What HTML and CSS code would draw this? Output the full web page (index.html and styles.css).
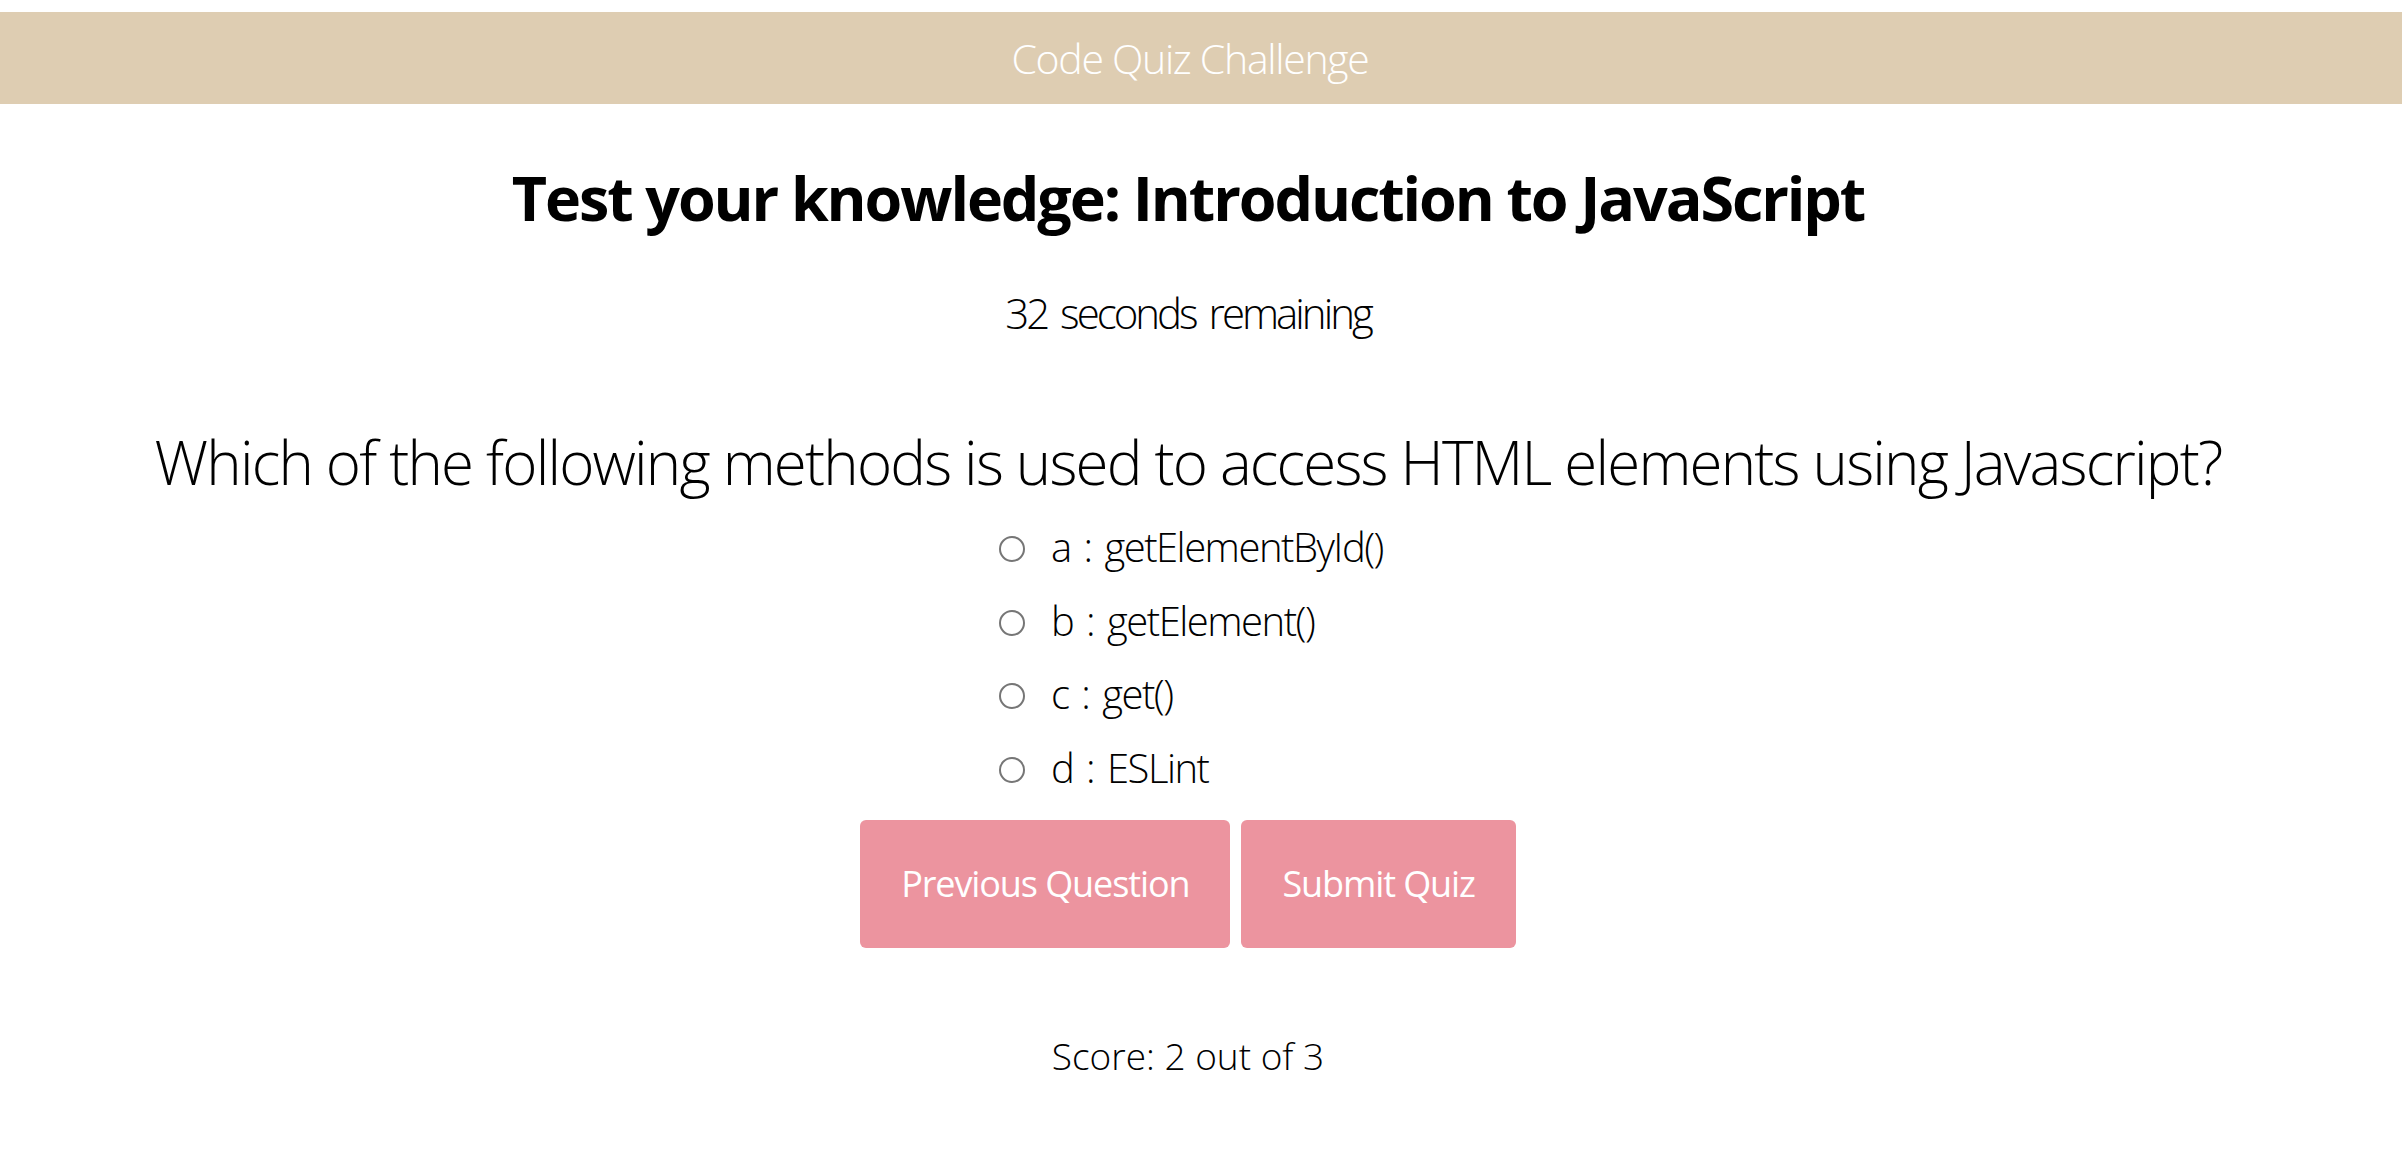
FILE: index.html
```html
<!DOCTYPE html>
<html lang="en">
<head>
<meta charset="utf-8">
<title>Code Quiz Challenge</title>
<link rel="stylesheet" href="styles.css">
</head>
<body>
<header class="topbar">Code Quiz Challenge</header>
<main class="quiz">
  <h1 class="title">Test your knowledge: Introduction to JavaScript</h1>
  <p class="timer">32 seconds remaining</p>
  <h2 class="question">Which of the following methods is used to access HTML elements using Javascript?</h2>
  <form class="options">
    <label class="option"><input type="radio" name="answer" class="radio"> a : getElementById()</label>
    <label class="option"><input type="radio" name="answer" class="radio"> b : getElement()</label>
    <label class="option"><input type="radio" name="answer" class="radio"> c : get()</label>
    <label class="option"><input type="radio" name="answer" class="radio"> d : ESLint</label>
  </form>
  <div class="actions">
    <button class="btn" type="button">Previous Question</button>
    <button class="btn" type="button">Submit Quiz</button>
  </div>
  <p class="score">Score: 2 out of 3</p>
</main>
</body>
</html>
```
FILE: styles.css
```css
* { box-sizing: border-box; }

body {
  margin: 0;
  padding-top: 12px;
  background: #ffffff;
  color: #000000;
  font-family: "Open Sans", "Noto Sans", sans-serif;
}

.topbar {
  height: 92px;
  line-height: 92px;
  padding-right: 22px;
  background: #decdb2;
  color: #ffffff;
  font-size: 41px;
  font-weight: 300;
  letter-spacing: -1.3px;
  text-align: center;
}

.quiz {
  display: flex;
  flex-direction: column;
  align-items: center;
  padding-right: 26px;
  text-align: center;
}

.title {
  margin: 56px 0 0;
  font-size: 61px;
  line-height: 76px;
  font-weight: 700;
  letter-spacing: -2.1px;
}

.timer {
  margin: 52px 0 0;
  font-size: 42px;
  line-height: 50px;
  font-weight: 300;
  letter-spacing: -3px;
  word-spacing: 5px;
}

.question {
  margin: 88px 0 0;
  font-size: 60px;
  line-height: 72px;
  font-weight: 300;
  letter-spacing: -1.8px;
}

.options {
  margin: 12px 0 0;
  padding-left: 6px;
  display: flex;
  flex-direction: column;
  align-items: flex-start;
}

.option {
  display: block;
  font-size: 40px;
  line-height: 73.5px;
  font-weight: 300;
  letter-spacing: -1.5px;
  word-spacing: 4px;
  white-space: nowrap;
}

.radio {
  appearance: none;
  -webkit-appearance: none;
  width: 26px;
  height: 26px;
  margin: 0 13px 0 0;
  border: 2px solid #767676;
  border-radius: 50%;
  background: #ffffff;
  vertical-align: middle;
  position: relative;
  top: -2px;
}

.actions {
  margin-top: 16px;
  display: flex;
  gap: 11px;
}

.btn {
  border: none;
  border-radius: 6px;
  background: #ec949f;
  color: #ffffff;
  font-family: inherit;
  font-size: 36px;
  font-weight: 400;
  line-height: 48px;
  letter-spacing: -1.1px;
  padding: 40px 41px;
}

.score {
  margin: 86px 0 0;
  font-size: 37px;
  line-height: 44px;
  font-weight: 300;
}
```
